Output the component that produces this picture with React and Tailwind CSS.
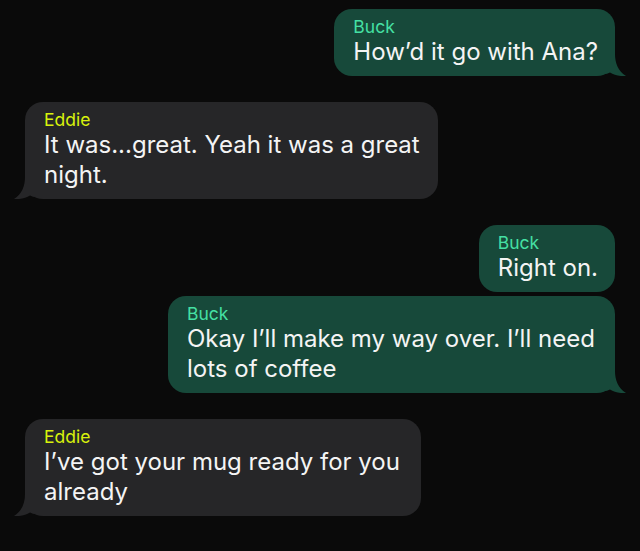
import React from 'react';

const messages = [
  { from: 'Buck', me: true, text: 'How\u2019d it go with Ana?', tail: true, gap: 'mt-[9px]', w: '' },
  { from: 'Eddie', me: false, text: 'It was...great. Yeah it was a great night.', tail: true, gap: 'mt-[26px]', w: 'w-[413px]' },
  { from: 'Buck', me: true, text: 'Right on.', tail: false, gap: 'mt-[26px]', w: '' },
  { from: 'Buck', me: true, text: 'Okay I\u2019ll make my way over. I\u2019ll need lots of coffee', tail: true, gap: 'mt-[4px]', w: 'w-[447px]' },
  { from: 'Eddie', me: false, text: 'I\u2019ve got your mug ready for you already', tail: true, gap: 'mt-[26px]', w: 'w-[396px]' },
];

function Tail({ me }) {
  return (
    <svg
      width="22"
      height="22"
      viewBox="0 0 22 22"
      className={`absolute bottom-0 ${me ? 'right-[-11px]' : 'left-[-11px] scale-x-[-1]'}`}
    >
      <path
        d="M0 0 L11 0 C11 9 14 17 22 22 C15 22.5 10 21 6 18.5 C4 19.5 2 20 0 20 Z"
        className={me ? 'fill-[#17493a]' : 'fill-[#262628]'}
      />
    </svg>
  );
}

function Bubble({ msg }) {
  const { me } = msg;
  return (
    <div className={`flex ${me ? 'justify-end pr-[25px]' : 'justify-start pl-[25px]'} ${msg.gap}`}>
      <div
        className={`relative ${msg.w} rounded-[18px] pl-[19px] pr-[17px] pt-[8px] pb-[9px] ${
          me ? 'bg-[#17493a]' : 'bg-[#262628]'
        }`}
      >
        {msg.tail && <Tail me={me} />}
        <div className={`relative text-[17.5px] leading-[20px] ${me ? 'text-[#45e0a4]' : 'text-[#d8f20c]'}`}>
          {msg.from}
        </div>
        <div className="relative text-[24px] leading-[30px] text-[#f4f4f4]">{msg.text}</div>
      </div>
    </div>
  );
}

export default function App() {
  return (
    <div className="w-[640px] h-[551px] overflow-hidden bg-[#0a0a0a] font-['Inter','Liberation_Sans',sans-serif]">
      {messages.map((m, i) => (
        <Bubble key={i} msg={m} />
      ))}
    </div>
  );
}
